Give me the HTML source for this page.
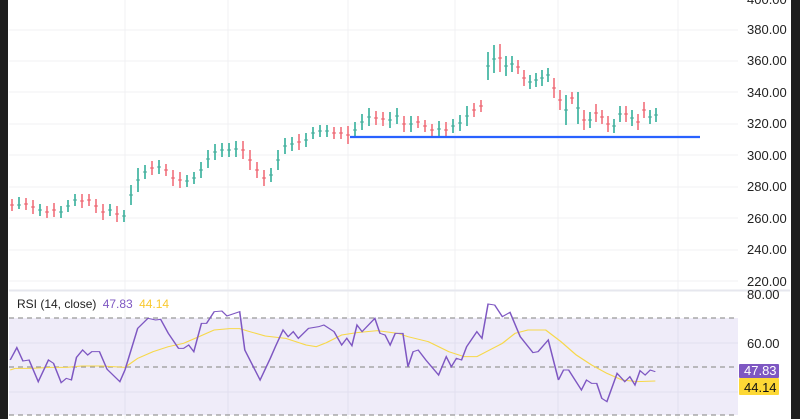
<!DOCTYPE html>
<html><head><meta charset="utf-8"><style>
html,body{margin:0;padding:0;background:#fff;}
body{width:800px;height:419px;overflow:hidden;position:relative;font-family:"Liberation Sans",sans-serif;}
.lbl{position:absolute;left:747px;font-size:13px;color:#222;line-height:14px;}
</style></head><body>
<svg width="800" height="419" style="position:absolute;left:0;top:0">
<rect x="0" y="0" width="800" height="419" fill="#fff"/>
<g stroke="#f0f1f3" stroke-width="1">
<path d="M9 30H738M9 61H738M9 92H738M9 124H738M9 155H738M9 187H738M9 218H738M9 250H738M9 281H738"/>
<path d="M125 0V419M228 0V419M348 0V419M455 0V419M558 0V419M678 0V419"/>
</g>
<line x1="9" y1="290.5" x2="790" y2="290.5" stroke="#e6e7ee" stroke-width="2"/>
<rect x="9" y="318" width="729" height="97" fill="#efecf9"/>
<g stroke="#e2dff0"><path d="M9 343H738M9 392H738"/><path d="M125 318V415M228 318V415M348 318V415M455 318V415M558 318V415M678 318V415"/></g>
<g stroke="#999" stroke-width="1.3" stroke-dasharray="5,4">
<path d="M9 318H738M9 367H738M9 415H738"/></g>
<g stroke="#5bbfae" stroke-width="2" fill="none">
<path d="M19 197V209M40 204V216M61 206V218M68 200V212M75 194V206M110 204V216M124 210V222M131 185V205M138 168V192M145 165V179M159 160V174M187 175V187M194 172V184M201 162V178M208 150V168M215 144V160M222 143V157M229 143V157M236 141V157M271 168V182M278 150V170M285 138V154M292 137V151M306 133V147M313 127V139M320 125V137M327 125V137M355 122V138M362 114V130M369 108V126M390 112V128M397 108V124M411 116V132M439 121V137M453 119V133M460 115V131M467 106V126M488 52V80M494 45V73M506 56V76M512 56V72M530 75V89M536 73V87M542 70V86M548 68V82M566 95V125M578 92V124M590 112V128M614 119V133M620 106V122M632 110V126M650 110V124M656 108V122"/>
</g>
<g stroke="#f48c95" stroke-width="2" fill="none">
<path d="M12 199V211M26 198V210M33 200V214M47 206V218M54 203V217M82 194V208M89 194V206M96 199V213M103 204V220M117 206V222M152 161V175M166 164V176M173 170V186M180 172V188M243 141V159M250 150V170M257 162V178M264 170V186M299 134V150M334 127V139M341 127V139M348 126V144M376 111V125M383 112V126M404 116V132M418 116V128M425 120V132M432 124V136M446 122V138M474 103V117M481 100V112M500 44V72M518 60V74M524 70V86M554 78V98M560 90V110M572 92V104M584 110V130M596 104V122M602 110V124M608 116V132M626 106V122M638 114V130M644 102V118"/>
</g>
<g stroke="#4aa898" stroke-width="1" fill="none">
<path d="M17 205H21M38 210H42M59 212H63M66 206H70M73 200H77M108 210H112M122 216H126M129 195H133M136 180H140M143 172H147M157 167H161M185 181H189M192 178H196M199 170H203M206 159H210M213 152H217M220 150H224M227 150H231M234 149H238M269 175H273M276 160H280M283 146H287M290 144H294M304 140H308M311 133H315M318 131H322M325 131H329M353 130H357M360 122H364M367 117H371M388 120H392M395 116H399M409 124H413M437 129H441M451 126H455M458 123H462M465 116H469M486 66H490M492 59H496M504 66H508M510 64H514M528 82H532M534 80H538M540 78H544M546 75H550M564 110H568M576 108H580M588 120H592M612 126H616M618 114H622M630 118H634M648 117H652M654 115H658"/>
</g>
<g stroke="#e8606c" stroke-width="1" fill="none">
<path d="M10 205H14M24 204H28M31 207H35M45 212H49M52 210H56M80 201H84M87 200H91M94 206H98M101 212H105M115 214H119M150 168H154M164 170H168M171 178H175M178 180H182M241 150H245M248 160H252M255 170H259M262 178H266M297 142H301M332 133H336M339 133H343M346 135H350M374 118H378M381 119H385M402 124H406M416 122H420M423 126H427M430 130H434M444 130H448M472 110H476M479 106H483M498 58H502M516 67H520M522 78H526M552 88H556M558 100H562M570 98H574M582 120H586M594 113H598M600 117H604M606 124H610M624 114H628M636 122H640M642 110H646"/>
</g>
<line x1="350" y1="137" x2="700" y2="137" stroke="#2962ff" stroke-width="2.2"/>
<g transform="translate(0,280) scale(0.51,0.33333)">
<polyline fill="none" stroke="#f7d84a" stroke-width="3" points="20,270 30,265 60,265 100,262 130,262 160,258 200,258 245,262 270,235 300,215 330,200 360,190 390,170 420,150 450,146 470,146 490,155 520,168 560,175 600,195 620,200 640,188 670,165 700,158 740,152 780,160 800,170 840,185 880,215 910,230 935,230 960,210 985,190 1010,160 1035,150 1070,150 1100,185 1130,225 1160,255 1190,280 1220,300 1250,305 1285,303"/>
<polyline fill="none" stroke="#7e57c2" stroke-width="3" points="20,240 33,203 45,243 57,240 75,305 95,240 105,250 120,308 130,295 140,300 150,232 162,210 172,225 180,215 195,215 210,268 235,305 245,270 270,145 290,115 305,120 315,118 330,160 350,205 360,205 370,195 380,215 395,130 405,130 420,95 435,93 445,108 470,95 480,210 510,300 530,235 540,200 555,150 565,170 575,155 585,175 605,145 625,140 635,135 655,155 670,195 680,175 690,197 700,135 710,155 735,115 745,160 755,165 765,195 775,160 790,160 800,260 810,215 820,210 835,240 860,285 875,230 885,260 895,235 905,240 915,200 935,155 945,175 957,72 970,75 985,110 1000,97 1020,170 1045,218 1055,215 1075,180 1095,300 1105,270 1115,270 1140,330 1150,300 1160,310 1170,310 1180,355 1190,365 1210,280 1225,305 1235,290 1245,315 1255,272 1265,285 1275,270 1285,275"/>
</g>
<rect x="0" y="0" width="8" height="419" fill="#1e1e1e"/>
<rect x="791" y="0" width="9" height="419" fill="#1e1e1e"/>
<rect x="739" y="364" width="40" height="14" fill="#7e57c2" rx="1"/>
<rect x="739" y="378" width="40" height="17" fill="#fdd835" rx="1"/>
</svg>
<div class="lbl" style="top:-7px">400.00</div>
<div class="lbl" style="top:23px">380.00</div>
<div class="lbl" style="top:54px">360.00</div>
<div class="lbl" style="top:86px">340.00</div>
<div class="lbl" style="top:117px">320.00</div>
<div class="lbl" style="top:149px">300.00</div>
<div class="lbl" style="top:180px">280.00</div>
<div class="lbl" style="top:212px">260.00</div>
<div class="lbl" style="top:243px">240.00</div>
<div class="lbl" style="top:275px">220.00</div>
<div class="lbl" style="top:288px">80.00</div>
<div class="lbl" style="top:337px">60.00</div>
<div class="lbl" style="top:364px;left:744px;color:#fff">47.83</div>
<div class="lbl" style="top:381px;left:744px;color:#111">44.14</div>
<div style="position:absolute;left:17px;top:297px;font-size:12px;line-height:14px;color:#222;white-space:nowrap">RSI (14, close) <span style="color:#7e57c2;margin-left:3px">47.83</span> <span style="color:#f9c92f;margin-left:3px">44.14</span></div>
</body></html>
